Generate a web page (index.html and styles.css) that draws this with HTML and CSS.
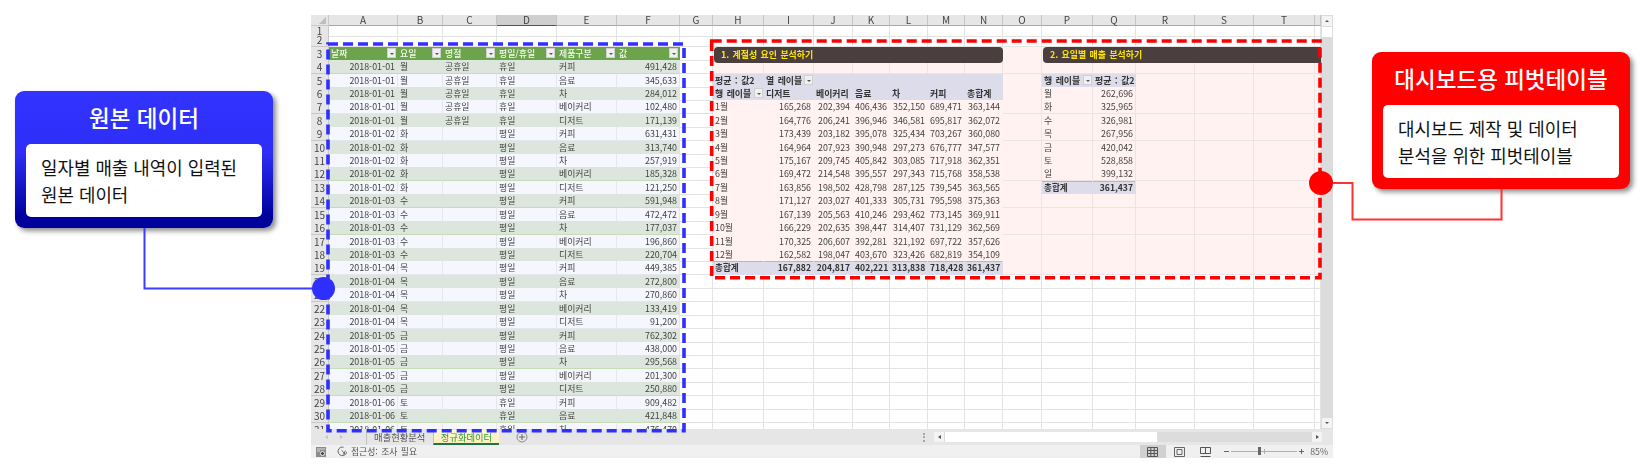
FILE: index.html
```html
<!DOCTYPE html>
<html lang="ko">
<head>
  <meta charset="UTF-8">
  <title>정규화 데이터</title>
  <link rel="stylesheet" href="styles.css">
</head>
<body>
  <div class="stage">
    <!-- Left callout -->
    <section class="callout callout-blue">
      <h2>원본 데이터</h2>
      <p>일자별 매출 내역이 입력된<br>원본 데이터</p>
    </section>

    <!-- Spreadsheet window -->
    <div class="sheet">
      <div class="sheet-main">
        <div class="cells">
          <div class="row cols"><i class="corner"></i><span>A</span><span>B</span><span>C</span><span class="sel">D</span><span>E</span><span>F</span><span>G</span><span>H</span><span>I</span><span>J</span><span>K</span><span>L</span><span>M</span><span>N</span><span>O</span><span>P</span><span>Q</span><span>R</span><span>S</span><span>T</span><span></span></div>
          <div class="row r1"><span>1</span><i></i><i></i><i></i><i></i><i></i><i></i><i></i><i></i><i></i><i></i><i></i><i></i><i></i><i></i><i></i><i></i><i></i><i></i><i></i><i></i><i></i></div>
          <div class="row r2"><span>2</span><i></i><i></i><i></i><i></i><i></i><i></i><i></i><i></i><i></i><i></i><i></i><i></i><i></i><i></i><i></i><i></i><i></i><i></i><i></i><i></i><i></i></div>
          <div class="row th pk"><span>3</span><b>날짜<em></em></b><b>요일<em></em></b><b>명절<em></em></b><b>평일/휴일<em></em></b><b>제품구분<em></em></b><b>값<em></em></b><i></i><i></i><i></i><i></i><i></i><i></i><i></i><i></i><i></i><i></i><i></i><i></i><i></i><i></i><i></i></div>
          <div class="row data g pk"><span>4</span><span>2018-01-01</span><span>월</span><span>공휴일</span><span>휴일</span><span>커피</span><span>491,428</span><i></i><i></i><i></i><i></i><i></i><i></i><i></i><i></i><i></i><i></i><i></i><i></i><i></i><i></i><i></i></div>
          <div class="row data pk pv"><span>5</span><span>2018-01-01</span><span>월</span><span>공휴일</span><span>휴일</span><span>음료</span><span>345,633</span><i></i><b class="hd">평균 : 값2</b><b class="hd flt">열 레이블<em></em></b><b class="hd"></b><b class="hd"></b><b class="hd"></b><b class="hd"></b><b class="hd"></b><i></i><b class="hd flt">행 레이블<em></em></b><b class="hd n">평균 : 값2</b><i></i><i></i><i></i><i></i></div>
          <div class="row data g pk pv"><span>6</span><span>2018-01-01</span><span>월</span><span>공휴일</span><span>휴일</span><span>차</span><span>284,012</span><i></i><b class="hd flt">행 레이블<em></em></b><b class="hd">디저트</b><b class="hd">베이커리</b><b class="hd">음료</b><b class="hd">차</b><b class="hd">커피</b><b class="hd">총합계</b><i></i><span>월</span><span class="n">262,696</span><i></i><i></i><i></i><i></i></div>
          <div class="row data pk pv mon"><span>7</span><span>2018-01-01</span><span>월</span><span>공휴일</span><span>휴일</span><span>베이커리</span><span>102,480</span><i></i><span>1월</span><span>165,268</span><span>202,394</span><span>406,436</span><span>352,150</span><span>689,471</span><span>363,144</span><i></i><span>화</span><span class="n">325,965</span><i></i><i></i><i></i><i></i></div>
          <div class="row data g pk pv mon"><span>8</span><span>2018-01-01</span><span>월</span><span>공휴일</span><span>휴일</span><span>디저트</span><span>171,139</span><i></i><span>2월</span><span>164,776</span><span>206,241</span><span>396,946</span><span>346,581</span><span>695,817</span><span>362,072</span><i></i><span>수</span><span class="n">326,981</span><i></i><i></i><i></i><i></i></div>
          <div class="row data pk pv mon"><span>9</span><span>2018-01-02</span><span>화</span><span></span><span>평일</span><span>커피</span><span>631,431</span><i></i><span>3월</span><span>173,439</span><span>203,182</span><span>395,078</span><span>325,434</span><span>703,267</span><span>360,080</span><i></i><span>목</span><span class="n">267,956</span><i></i><i></i><i></i><i></i></div>
          <div class="row data g pk pv mon"><span>10</span><span>2018-01-02</span><span>화</span><span></span><span>평일</span><span>음료</span><span>313,740</span><i></i><span>4월</span><span>164,964</span><span>207,923</span><span>390,948</span><span>297,273</span><span>676,777</span><span>347,577</span><i></i><span>금</span><span class="n">420,042</span><i></i><i></i><i></i><i></i></div>
          <div class="row data pk pv mon"><span>11</span><span>2018-01-02</span><span>화</span><span></span><span>평일</span><span>차</span><span>257,919</span><i></i><span>5월</span><span>175,167</span><span>209,745</span><span>405,842</span><span>303,085</span><span>717,918</span><span>362,351</span><i></i><span>토</span><span class="n">528,858</span><i></i><i></i><i></i><i></i></div>
          <div class="row data g pk pv mon"><span>12</span><span>2018-01-02</span><span>화</span><span></span><span>평일</span><span>베이커리</span><span>185,328</span><i></i><span>6월</span><span>169,472</span><span>214,548</span><span>395,557</span><span>297,343</span><span>715,768</span><span>358,538</span><i></i><span>일</span><span class="n">399,132</span><i></i><i></i><i></i><i></i></div>
          <div class="row data pk pv mon"><span>13</span><span>2018-01-02</span><span>화</span><span></span><span>평일</span><span>디저트</span><span>121,250</span><i></i><span>7월</span><span>163,856</span><span>198,502</span><span>428,798</span><span>287,125</span><span>739,545</span><span>363,565</span><i></i><b class="hd tot">총합계</b><b class="hd tot n">361,437</b><i></i><i></i><i></i><i></i></div>
          <div class="row data g pk pv mon"><span>14</span><span>2018-01-03</span><span>수</span><span></span><span>평일</span><span>커피</span><span>591,948</span><i></i><span>8월</span><span>171,127</span><span>203,027</span><span>401,333</span><span>305,731</span><span>795,598</span><span>375,363</span><i></i><i></i><i></i><i></i><i></i><i></i><i></i></div>
          <div class="row data pk pv mon"><span>15</span><span>2018-01-03</span><span>수</span><span></span><span>평일</span><span>음료</span><span>472,472</span><i></i><span>9월</span><span>167,139</span><span>205,563</span><span>410,246</span><span>293,462</span><span>773,145</span><span>369,911</span><i></i><i></i><i></i><i></i><i></i><i></i><i></i></div>
          <div class="row data g pk pv mon"><span>16</span><span>2018-01-03</span><span>수</span><span></span><span>평일</span><span>차</span><span>177,037</span><i></i><span>10월</span><span>166,229</span><span>202,635</span><span>398,447</span><span>314,407</span><span>731,129</span><span>362,569</span><i></i><i></i><i></i><i></i><i></i><i></i><i></i></div>
          <div class="row data pk pv mon"><span>17</span><span>2018-01-03</span><span>수</span><span></span><span>평일</span><span>베이커리</span><span>196,860</span><i></i><span>11월</span><span>170,325</span><span>206,607</span><span>392,281</span><span>321,192</span><span>697,722</span><span>357,626</span><i></i><i></i><i></i><i></i><i></i><i></i><i></i></div>
          <div class="row data g pk pv mon"><span>18</span><span>2018-01-03</span><span>수</span><span></span><span>평일</span><span>디저트</span><span>220,704</span><i></i><span>12월</span><span>162,582</span><span>198,047</span><span>403,670</span><span>323,426</span><span>682,819</span><span>354,109</span><i></i><i></i><i></i><i></i><i></i><i></i><i></i></div>
          <div class="row data pk pv mon"><span>19</span><span>2018-01-04</span><span>목</span><span></span><span>평일</span><span>커피</span><span>449,385</span><i></i><b class="hd tot">총합계</b><b class="hd tot">167,882</b><b class="hd tot">204,817</b><b class="hd tot">402,221</b><b class="hd tot">313,838</b><b class="hd tot">718,428</b><b class="hd tot">361,437</b><i></i><i></i><i></i><i></i><i></i><i></i><i></i></div>
          <div class="row data g"><span>20</span><span>2018-01-04</span><span>목</span><span></span><span>평일</span><span>음료</span><span>272,800</span><i></i><i></i><i></i><i></i><i></i><i></i><i></i><i></i><i></i><i></i><i></i><i></i><i></i><i></i><i></i></div>
          <div class="row data"><span>21</span><span>2018-01-04</span><span>목</span><span></span><span>평일</span><span>차</span><span>270,860</span><i></i><i></i><i></i><i></i><i></i><i></i><i></i><i></i><i></i><i></i><i></i><i></i><i></i><i></i><i></i></div>
          <div class="row data g"><span>22</span><span>2018-01-04</span><span>목</span><span></span><span>평일</span><span>베이커리</span><span>133,419</span><i></i><i></i><i></i><i></i><i></i><i></i><i></i><i></i><i></i><i></i><i></i><i></i><i></i><i></i><i></i></div>
          <div class="row data"><span>23</span><span>2018-01-04</span><span>목</span><span></span><span>평일</span><span>디저트</span><span>91,200</span><i></i><i></i><i></i><i></i><i></i><i></i><i></i><i></i><i></i><i></i><i></i><i></i><i></i><i></i><i></i></div>
          <div class="row data g"><span>24</span><span>2018-01-05</span><span>금</span><span></span><span>평일</span><span>커피</span><span>762,302</span><i></i><i></i><i></i><i></i><i></i><i></i><i></i><i></i><i></i><i></i><i></i><i></i><i></i><i></i><i></i></div>
          <div class="row data"><span>25</span><span>2018-01-05</span><span>금</span><span></span><span>평일</span><span>음료</span><span>438,000</span><i></i><i></i><i></i><i></i><i></i><i></i><i></i><i></i><i></i><i></i><i></i><i></i><i></i><i></i><i></i></div>
          <div class="row data g"><span>26</span><span>2018-01-05</span><span>금</span><span></span><span>평일</span><span>차</span><span>295,568</span><i></i><i></i><i></i><i></i><i></i><i></i><i></i><i></i><i></i><i></i><i></i><i></i><i></i><i></i><i></i></div>
          <div class="row data"><span>27</span><span>2018-01-05</span><span>금</span><span></span><span>평일</span><span>베이커리</span><span>201,300</span><i></i><i></i><i></i><i></i><i></i><i></i><i></i><i></i><i></i><i></i><i></i><i></i><i></i><i></i><i></i></div>
          <div class="row data g"><span>28</span><span>2018-01-05</span><span>금</span><span></span><span>평일</span><span>디저트</span><span>250,880</span><i></i><i></i><i></i><i></i><i></i><i></i><i></i><i></i><i></i><i></i><i></i><i></i><i></i><i></i><i></i></div>
          <div class="row data"><span>29</span><span>2018-01-06</span><span>토</span><span></span><span>휴일</span><span>커피</span><span>909,482</span><i></i><i></i><i></i><i></i><i></i><i></i><i></i><i></i><i></i><i></i><i></i><i></i><i></i><i></i><i></i></div>
          <div class="row data g"><span>30</span><span>2018-01-06</span><span>토</span><span></span><span>휴일</span><span>음료</span><span>421,848</span><i></i><i></i><i></i><i></i><i></i><i></i><i></i><i></i><i></i><i></i><i></i><i></i><i></i><i></i><i></i></div>
          <div class="row data"><span>31</span><span>2018-01-06</span><span>토</span><span></span><span>휴일</span><span>차</span><span>476,470</span><i></i><i></i><i></i><i></i><i></i><i></i><i></i><i></i><i></i><i></i><i></i><i></i><i></i><i></i><i></i></div>

          <!-- Section titles float over the cells -->
          <div class="bar bar-1">1. 계절성 요인 분석하기</div>
          <div class="bar bar-2">2. 요일별 매출 분석하기</div>
        </div>

        <div class="vscroll">
          <span class="sbtn up"></span>
          <span class="vthumb"></span>
          <span class="sbtn down"></span>
        </div>
      </div>

      <div class="tabbar">
        <div class="tab-nav"><span class="arr-l"></span><span class="arr-r"></span></div>
        <div class="tab">매출현황분석</div>
        <div class="tab active">정규화데이터</div>
        <svg class="add" width="12" height="12" viewBox="0 0 12 12"><circle cx="6" cy="6" r="5" fill="none" stroke="#8a8a8a"/><path d="M6 3v6M3 6h6" stroke="#666"/></svg>
        <div class="grip"></div>
        <div class="hscroll">
          <span class="hbtn"><span class="arr-l dark"></span></span>
          <span class="hthumb"></span>
          <span class="hbtn"><span class="arr-r dark"></span></span>
        </div>
      </div>

      <div class="statusbar">
        <svg class="macro" width="10" height="10" viewBox="0 0 10 10"><rect width="10" height="10" fill="#8c8c8c"/><path d="M1 2h8M1 4h3" stroke="#ddd"/><circle cx="6.5" cy="6.5" r="2" fill="#444" stroke="#eee"/></svg>
        <svg class="access" width="11" height="11" viewBox="0 0 11 11" fill="none" stroke="#666"><path d="M6.5 1.2A4.3 4.3 0 1 0 9.6 6"/><path d="M4.6 4.4l1.6 1.4 2 2.6M8.6 4.6L6.2 8.6"/></svg>
        <span class="status-text">접근성: 조사 필요</span>
        <div class="views">
          <span class="view on"><svg width="11" height="10" viewBox="0 0 11 10" fill="none" stroke="#555"><path d="M.5.5h10v9H.5zM.5 3.5h10M.5 6.5h10M3.8.5v9M7.2.5v9"/></svg></span>
          <span class="view"><svg width="11" height="10" viewBox="0 0 11 10" fill="none" stroke="#666"><path d="M.5.5h10v9H.5zM3 2.5h5v5H3z"/></svg></span>
          <span class="view"><svg width="11" height="10" viewBox="0 0 11 10" fill="none" stroke="#555"><path d="M.5.5v6h10v-6M.5.5h10M5.5.5v6M.5 9.5h10" /></svg></span>
        </div>
        <div class="zoom-slider"><span class="zminus"></span><span class="ztrack"><span class="ztick"></span><span class="zknob"></span></span><span class="zplus"></span></div>
        <span class="zoom-text">85%</span>
      </div>
    </div>

    <!-- Right callout -->
    <section class="callout callout-red">
      <h2>대시보드용 피벗테이블</h2>
      <p>대시보드 제작 및 데이터<br>분석을 위한 피벗테이블</p>
    </section>
  </div>

  <!-- Dashed frames and leader lines drawn over the sheet -->
  <svg class="marks" width="1642" height="467" viewBox="0 0 1642 467" fill="none">
    <rect x="328" y="44" width="356" height="386.7" stroke="#2f2fff" stroke-width="3.6" stroke-dasharray="10 5"/>
    <path d="M144.5 228V288.5H314" stroke="#3c3cff" stroke-width="2"/>
    <circle cx="323.5" cy="288.5" r="11.5" fill="#2f2fff"/>
    <rect x="711.7" y="41" width="608.3" height="236.7" stroke="#ff0000" stroke-width="3.6" stroke-dasharray="10 5"/>
    <path d="M1330 183H1352.5V219.5H1501.5V189" stroke="#ff3030" stroke-width="2"/>
    <circle cx="1321" cy="183" r="12" fill="#ff0000"/>
  </svg>
</body>
</html>
```

FILE: styles.css
```css
/* General styles */
body {
  margin: 0;
  background-color: white;
  font-family: "Noto Sans CJK KR", "Noto Sans", sans-serif;
}

.stage {
  display: flex;
  align-items: flex-start;
  height: 467px;
  padding: 15px 0 0 15px;
  box-sizing: border-box;
  overflow: hidden;
}

/* Callouts */
.callout {
  flex: none;
  width: 258px;
  height: 137px;
  box-sizing: border-box;
  padding: 0 11px;
  border-radius: 9px;
  box-shadow: 3px 3px 5px rgba(0, 0, 0, 0.45);
}

.callout h2 {
  margin: 0;
  height: 53px;
  line-height: 52px;
  text-align: center;
  font-size: 22.5px;
  font-weight: 500;
  color: white;
}

.callout p {
  margin: 0;
  height: 73px;
  box-sizing: border-box;
  padding: 10px 15px;
  border-radius: 5px;
  background-color: white;
  color: #111;
  font-size: 17.9px;
  line-height: 26.7px;
  white-space: nowrap;
}

.callout-blue {
  margin: 76px 38px 0 0;
  background: linear-gradient(#3333ff 0%, #2e2ef8 45%, #00009c 92%);
}

.callout-red {
  margin: 37px 0 0 39px;
  background-color: #ff0000;
}

/* Spreadsheet window */
.sheet {
  flex: none;
  width: 1022px;
  height: 443px;
  display: flex;
  flex-direction: column;
  background-color: #e6e6e6;
  color: #444;
  font-size: 8.9px;
  word-spacing: 1px;
  filter: blur(0.3px);
}

.sheet-main {
  display: flex;
  height: 414px;
}

.cells {
  position: relative;
  width: 1010px;
  overflow: hidden;
  background-color: white;
}

.row {
  display: grid;
  grid-template-columns: 18px 69px 45px 54px 60px 60px 63px 33px 51px 50px 39px 37px 38px 37px 38px 39px 51px 43px 59px 59px 61px 6px;
  height: 13.43px;
  line-height: 13px;
}

.row > * {
  display: block;
  box-sizing: border-box;
  padding: 0 2px;
  white-space: nowrap;
  font-style: normal;
  font-weight: 400;
  text-decoration: none;
  border-right: 1px solid #e3e3e3;
  border-bottom: 1px solid #e3e3e3;
}

/* Row numbers */
.row > :first-child {
  padding: 0;
  text-align: center;
  font-size: 10px;
  background-color: #e6e6e6;
  border-color: #c8c8c8;
  color: #444;
}

/* Column letters */
.cols {
  height: 11px;
  line-height: 10px;
}

.cols > * {
  padding: 0;
  text-align: center;
  font-size: 10px;
  background-color: #e6e6e6;
  border-right-color: #c4c4c4;
  border-bottom: 1px solid #a8a8a8;
}

.cols .sel {
  background-color: #cfcfcf;
  border-bottom: 1px solid #217346;
}

.corner {
  position: relative;
}

.corner::after {
  content: "";
  position: absolute;
  right: 2px;
  bottom: 1px;
  border-left: 7px solid transparent;
  border-bottom: 7px solid #bdbdbd;
}

.r1 {
  height: 10px;
  line-height: 10px;
}

.r2 {
  height: 10.7px;
  line-height: 8px;
}

.r2 > :first-child {
  overflow: hidden;
}

/* Data table */
.th > b {
  display: flex;
  justify-content: space-between;
  align-items: center;
  padding-right: 1px;
  background-color: #6ba44a;
  border-color: #6ba44a;
  color: #f4f9ef;
  font-weight: 500;
}

.th em,
.flt em {
  flex: none;
  width: 9px;
  height: 10px;
  position: relative;
  background-color: #f0f0f0;
  border: 1px solid #d0d0d0;
  box-sizing: border-box;
}

.th em::after,
.flt em::after {
  content: "";
  position: absolute;
  left: 2px;
  top: 4px;
  border-left: 2px solid transparent;
  border-right: 2px solid transparent;
  border-top: 2px solid #555;
}

.data > :nth-child(n+2):nth-child(-n+7) {
  background-color: #f5f6fe;
  border-right-color: #e6e6f0;
  border-bottom-color: #e4e6f0;
}

.data.g > :nth-child(n+2):nth-child(-n+7) {
  background-color: #dce6dc;
  border-right-color: #dce6dc;
  border-bottom-color: #c6dcb8;
}

.data > :nth-child(2),
.data > :nth-child(7) {
  text-align: right;
}

/* Pink dashboard area */
.pk > :nth-child(n+9) {
  background-color: #fff2f1;
  border-color: #f0e2e2;
}

.pv > :nth-child(n+9):nth-child(-n+15) {
  border-color: #fff2f1;
}

.mon > :nth-child(n+10):nth-child(-n+15) {
  text-align: right;
}

.pk > .hd,
.pv > .hd:nth-child(n+9) {
  background-color: #dcdcea;
  border-color: #dcdcea;
  color: #333;
  font-weight: 700;
}

.pk > .flt,
.pv > .flt:nth-child(n+9) {
  display: flex;
  justify-content: space-between;
  align-items: center;
  padding-right: 0;
}

.pk > .tot {
  box-shadow: inset 0 1px 0 #a9b8d6;
  font-size: 8.6px;
}

.n {
  text-align: right;
}

/* Section titles */
.bar {
  position: absolute;
  top: 31.7px;
  height: 16.6px;
  padding-left: 7px;
  box-sizing: border-box;
  border-radius: 4px 0 0 4px;
  background-color: #4a3f3e;
  color: #ffe600;
  font-size: 8.9px;
  font-weight: 700;
  line-height: 16px;
}

.bar-1 {
  left: 403px;
  width: 289px;
  border-radius: 4px;
}

.bar-2 {
  left: 732px;
  width: 278px;
}

/* Vertical scrollbar */
.vscroll {
  flex: none;
  width: 12px;
  display: flex;
  flex-direction: column;
  background-color: #dcdcdc;
}

.sbtn {
  display: block;
  position: relative;
  height: 10px;
  margin: 1px;
  background-color: #f4f4f4;
}

.sbtn::after {
  content: "";
  position: absolute;
  left: 3px;
  top: 4px;
  border-left: 2px solid transparent;
  border-right: 2px solid transparent;
}

.up::after {
  border-bottom: 2px solid #555;
}

.down {
  margin-top: auto;
}

.down::after {
  border-top: 2px solid #555;
}

.vthumb {
  height: 10px;
  margin: 0 1px;
  background-color: white;
}

/* Sheet tabs */
.tabbar {
  display: flex;
  align-items: center;
  height: 16px;
  background-color: #e6e6e6;
  font-size: 9.3px;
}

.tab-nav {
  width: 55px;
  display: flex;
  gap: 12px;
  padding-left: 14px;
  box-sizing: border-box;
}

.arr-l,
.arr-r {
  display: block;
  border-top: 2.5px solid transparent;
  border-bottom: 2.5px solid transparent;
}

.arr-l {
  border-right: 3px solid #c4c4c4;
}

.arr-r {
  border-left: 3px solid #c4c4c4;
}

.dark.arr-l {
  border-right-color: #555;
}

.dark.arr-r {
  border-left-color: #555;
}

.tab {
  width: 67px;
  height: 15px;
  line-height: 15px;
  text-align: center;
  border-left: 1px solid #c0c0c0;
  box-sizing: border-box;
  color: #555;
}

.tab.active {
  background: linear-gradient(#fff9cf, #fdefc0);
  border-bottom: 2px solid #217346;
  color: #2f9a3a;
}

.add {
  margin-left: 17px;
}

.grip {
  width: 2px;
  height: 9px;
  margin-left: 395px;
  border-left: 2px dotted #a8a8a8;
}

.hscroll {
  width: 389px;
  height: 10px;
  margin: 0 11px 0 7px;
  display: flex;
  background-color: #dcdcdc;
}

.hbtn {
  width: 10px;
  display: flex;
  align-items: center;
  justify-content: center;
  background-color: #f4f4f4;
}

.hthumb {
  width: 212px;
  margin-left: 1px;
  margin-right: auto;
  background-color: white;
}

/* Status bar */
.statusbar {
  display: flex;
  align-items: center;
  height: 13px;
  background-color: #f0f0f0;
  color: #555;
  font-size: 8.8px;
}

.macro {
  margin-left: 5px;
}

.access {
  margin-left: 11px;
}

.status-text {
  margin-left: 3px;
}

.views {
  display: flex;
  margin-left: auto;
  height: 100%;
}

.view {
  width: 26.5px;
  display: flex;
  align-items: center;
  justify-content: center;
}

.view.on {
  background-color: #d0d0d0;
}

.zoom-slider {
  display: flex;
  align-items: center;
  gap: 2px;
  margin-left: 5px;
}

.zminus,
.zplus {
  position: relative;
  width: 5px;
  height: 1px;
  background-color: #666;
}

.zplus::after {
  content: "";
  position: absolute;
  left: 2px;
  top: -2px;
  width: 1px;
  height: 5px;
  background-color: #666;
}

.ztrack {
  position: relative;
  width: 66px;
  height: 1px;
  background-color: #b0b0b0;
}

.ztick {
  position: absolute;
  left: 33px;
  top: -2px;
  width: 1px;
  height: 5px;
  background-color: #b0b0b0;
}

.zknob {
  position: absolute;
  left: 27px;
  top: -4px;
  width: 3px;
  height: 8px;
  background-color: #666;
}

.zoom-text {
  margin: 0 5px 0 6px;
  color: #666;
}

/* Overlay marks */
.marks {
  position: absolute;
  top: 0;
  left: 0;
  pointer-events: none;
}
```
